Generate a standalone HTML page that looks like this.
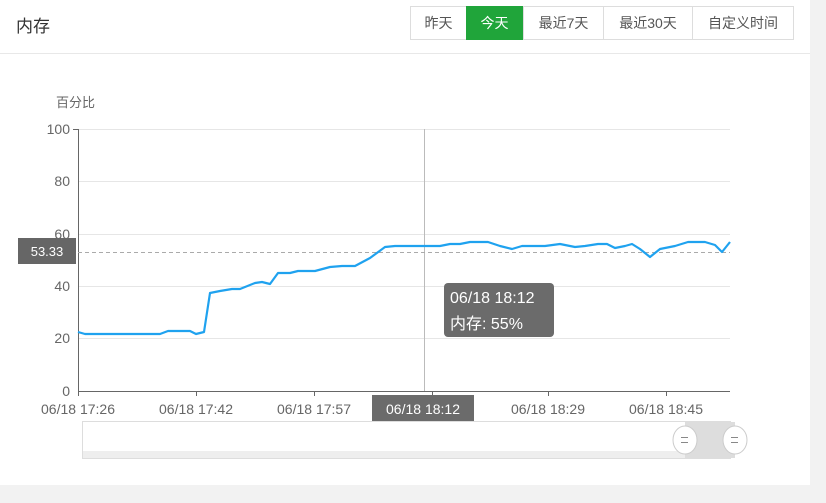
<!DOCTYPE html><html><head><meta charset="utf-8"><style>
body{margin:0;width:826px;height:503px;background:#f2f2f2;font-family:"Liberation Sans","Noto Sans CJK SC",sans-serif;overflow:hidden;position:relative}
.card{position:absolute;left:0;top:0;width:810px;height:485px;background:#fff}
.hd{position:absolute;left:0;top:0;width:810px;height:53px;border-bottom:1px solid #e8e8e8}
.t{position:absolute;left:16px;top:12px;font-size:17px;color:#333}
.btns{position:absolute;left:410px;top:6px;width:384px;height:34px}
.btns div{position:absolute;top:0;box-sizing:border-box;height:34px;font-size:14px;color:#555;line-height:33px;text-align:center;border:1px solid #ddd}
.btns .on{background:#20a53a;color:#fff;border-color:#20a53a}
</style></head><body><div class="card">
<div class="hd"><div class="t">内存</div>
<div class="btns"><div style="left:0;width:57px">昨天</div><div class="on" style="left:56px;width:57px">今天</div><div style="left:113px;width:81px">最近7天</div><div style="left:193px;width:90px">最近30天</div><div style="left:282px;width:102px">自定义时间</div></div></div>
<svg width="826" height="503" style="position:absolute;left:0;top:0" font-family="Liberation Sans,Noto Sans CJK SC,sans-serif">
<text x="56" y="107" font-size="13" fill="#666">百分比</text>
<g stroke="#e6e6e6"><line x1="78" y1="129.5" x2="730" y2="129.5"/><line x1="78" y1="181.5" x2="730" y2="181.5"/><line x1="78" y1="234.5" x2="730" y2="234.5"/><line x1="78" y1="286.5" x2="730" y2="286.5"/><line x1="78" y1="338.5" x2="730" y2="338.5"/></g>
<g font-size="14" fill="#666" text-anchor="end"><text x="70" y="134">100</text><text x="70" y="186">80</text><text x="70" y="239">60</text><text x="70" y="291">40</text><text x="70" y="343">20</text><text x="70" y="396">0</text></g>
<line x1="78.5" y1="129" x2="78.5" y2="391" stroke="#666"/>
<line x1="78" y1="391.5" x2="730" y2="391.5" stroke="#666"/>
<g stroke="#666"><line x1="78.5" y1="391" x2="78.5" y2="396"/><line x1="196.5" y1="391" x2="196.5" y2="396"/><line x1="314.5" y1="391" x2="314.5" y2="396"/><line x1="432.5" y1="391" x2="432.5" y2="396"/><line x1="548.5" y1="391" x2="548.5" y2="396"/><line x1="666.5" y1="391" x2="666.5" y2="396"/><line x1="73" y1="129.5" x2="78" y2="129.5"/></g>
<line x1="424.5" y1="129" x2="424.5" y2="391" stroke="#bbb"/>
<line x1="78" y1="252.5" x2="730" y2="252.5" stroke="#aaa" stroke-dasharray="4,3"/>
<polyline fill="none" stroke="#1fa2ef" stroke-width="2.2" stroke-linejoin="round" points="78,332 85,334 160,334 168,331 190,331 196,334 204,332 210,293 220,291 232,289 240,289 255,283 262,282 270,284 278,273 290,273 298,271 315,271 330,267 342,266 355,266 370,258 385,247 395,246 440,246 450,244 460,244 470,242 488,242 500,246 512,249 522,246 545,246 560,244 575,247 585,246 598,244 607,244 615,248 625,246 632,244 640,249 650,257 660,249 675,246 688,242 705,242 715,245 722,252 730,242"/>
<rect x="18" y="238" width="58" height="26" fill="#666"/><text x="47" y="256" font-size="13" fill="#fff" text-anchor="middle">53.33</text>
<rect x="444" y="283" width="110" height="54" rx="4" fill="#6b6b6b"/>
<text x="450" y="303" font-size="16" fill="#fff">06/18 18:12</text><text x="450" y="329" font-size="16" fill="#fff">内存: 55%</text>
<g font-size="14" fill="#666" text-anchor="middle"><text x="78" y="414">06/18 17:26</text><text x="196" y="414">06/18 17:42</text><text x="314" y="414">06/18 17:57</text><text x="548" y="414">06/18 18:29</text><text x="666" y="414">06/18 18:45</text></g>
<rect x="372" y="395" width="102" height="28" fill="#6b6b6b"/><text x="423" y="414" font-size="14" fill="#fff" text-anchor="middle">06/18 18:12</text>
<rect x="82.5" y="421.5" width="648" height="37" fill="#fff" stroke="#ddd"/>
<rect x="83" y="451" width="647" height="7" fill="#eee"/>
<rect x="685" y="422" width="50" height="36" fill="#ddd"/>
<ellipse cx="685" cy="440" rx="12" ry="14" fill="#fff" stroke="#ccc"/><ellipse cx="735" cy="440" rx="12" ry="14" fill="#fff" stroke="#ccc"/>
<g stroke="#888"><line x1="681" y1="437.5" x2="688" y2="437.5"/><line x1="681" y1="442.5" x2="688" y2="442.5"/><line x1="731" y1="437.5" x2="738" y2="437.5"/><line x1="731" y1="442.5" x2="738" y2="442.5"/></g>
</svg></div></body></html>
